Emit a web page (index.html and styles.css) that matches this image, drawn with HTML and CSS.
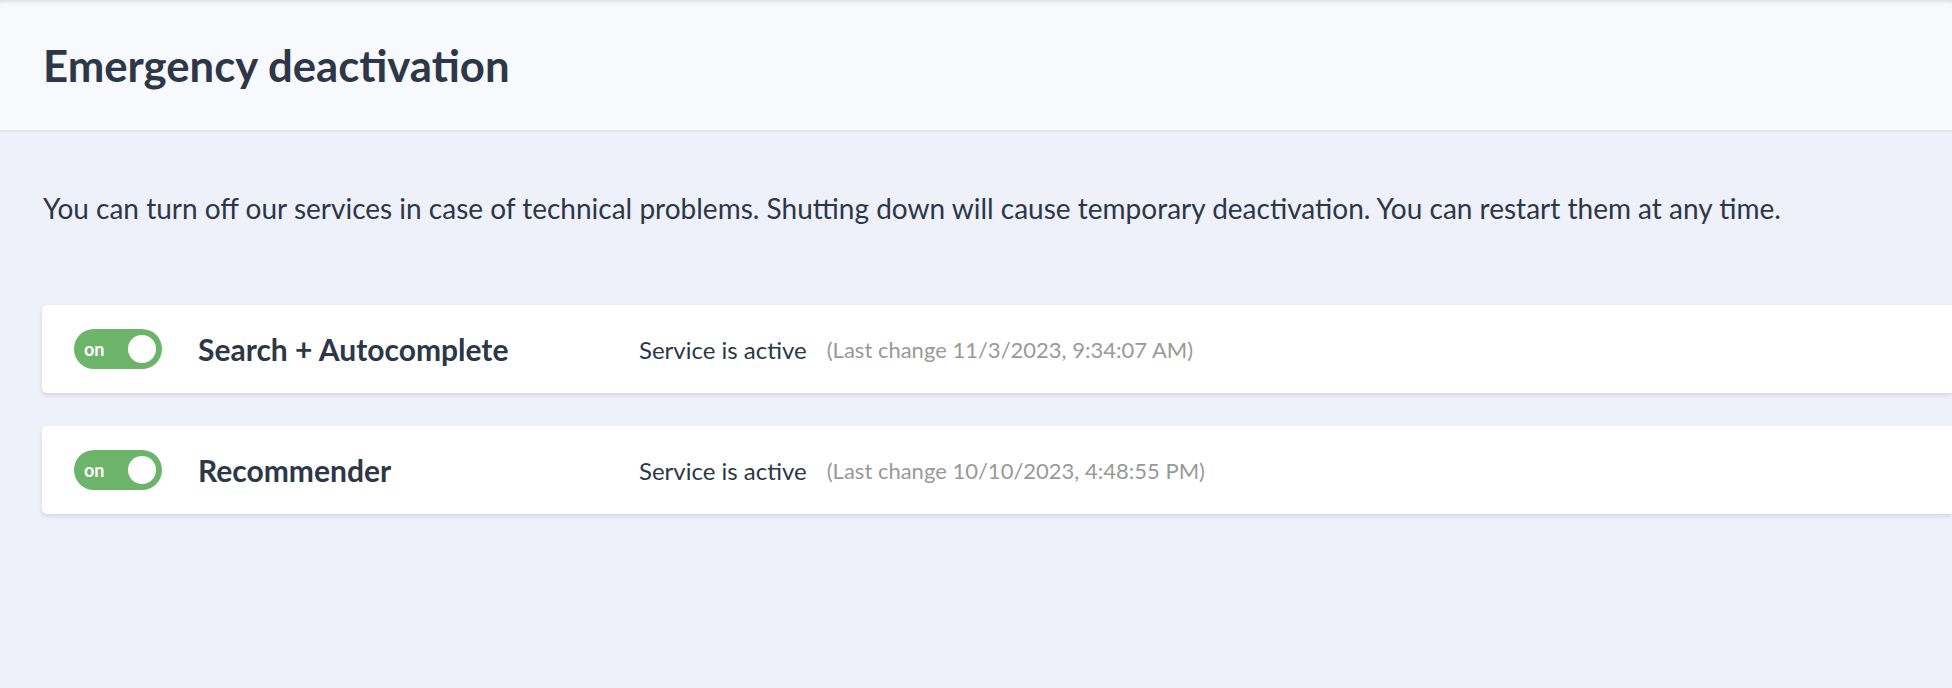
FILE: index.html
```html
<!DOCTYPE html>
<html lang="en">
<head>
<meta charset="utf-8">
<title>Emergency deactivation</title>
<link rel="stylesheet" href="styles.css">
</head>
<body>
  <header class="page-header">
    <h1 class="page-title">Emergency deactivation</h1>
  </header>
  <main class="content">
    <p class="intro">You can turn off our services in case of technical problems. Shutting down will cause temporary deactivation. You can restart them at any time.</p>
    <div class="service-list">
      <div class="service-card">
        <div class="toggle toggle-on"><span class="toggle-label">on</span><span class="toggle-knob"></span></div>
        <div class="service-name">Search + Autocomplete</div>
        <div class="service-status">Service is active</div>
        <div class="service-change">(Last change 11/3/2023, 9:34:07 AM)</div>
      </div>
      <div class="service-card">
        <div class="toggle toggle-on"><span class="toggle-label">on</span><span class="toggle-knob"></span></div>
        <div class="service-name">Recommender</div>
        <div class="service-status">Service is active</div>
        <div class="service-change">(Last change 10/10/2023, 4:48:55 PM)</div>
      </div>
    </div>
  </main>
</body>
</html>
```
FILE: styles.css
```css
* { box-sizing: border-box; }

html, body {
  margin: 0;
  padding: 0;
}

body {
  background: #eef1f9;
  font-family: Lato, "Open Sans", sans-serif;
  color: #2d3748;
  height: 688px;
  overflow: hidden;
}

.page-header {
  height: 132px;
  display: flex;
  align-items: center;
  padding-left: 43px;
  background: #f8f9fd;
  border-bottom: 2px solid #e4e7ee;
  box-shadow: inset 0 4px 4px -3px rgba(0, 0, 0, 0.14);
}

.page-title {
  margin: 0;
  font-size: 43.7px;
  font-weight: 700;
  line-height: 1.2;
  color: #2d3748;
}

.content {
  padding: 57px 0 0 42px;
}

.intro {
  margin: 0 0 77px 1px;
  font-size: 28px;
  line-height: 39px;
  color: #2d3748;
}

.service-list {
  display: flex;
  flex-direction: column;
  gap: 33px;
}

.service-card {
  height: 88px;
  background: #ffffff;
  border-radius: 5px 0 0 5px;
  box-shadow: 0 2px 4px rgba(40, 50, 80, 0.14);
  display: flex;
  align-items: center;
  padding-left: 32px;
}

.toggle {
  width: 88px;
  height: 40px;
  border-radius: 20px;
  display: flex;
  align-items: center;
  justify-content: space-between;
  padding: 0 6px 0 10px;
  flex-shrink: 0;
}

.toggle-on {
  background: #6db46b;
}

.toggle-label {
  color: #ffffff;
  font-size: 18px;
  font-weight: 700;
  line-height: 1;
  margin-top: -1px;
}

.toggle-knob {
  width: 28px;
  height: 28px;
  border-radius: 50%;
  background: #ffffff;
}

.service-name {
  margin-left: 36px;
  width: 441px;
  font-size: 30px;
  font-weight: 700;
  color: #2d3748;
}

.service-status {
  font-size: 24px;
  color: #2d3748;
}

.service-change {
  margin-left: 20px;
  font-size: 22px;
  color: #999999;
}
```
